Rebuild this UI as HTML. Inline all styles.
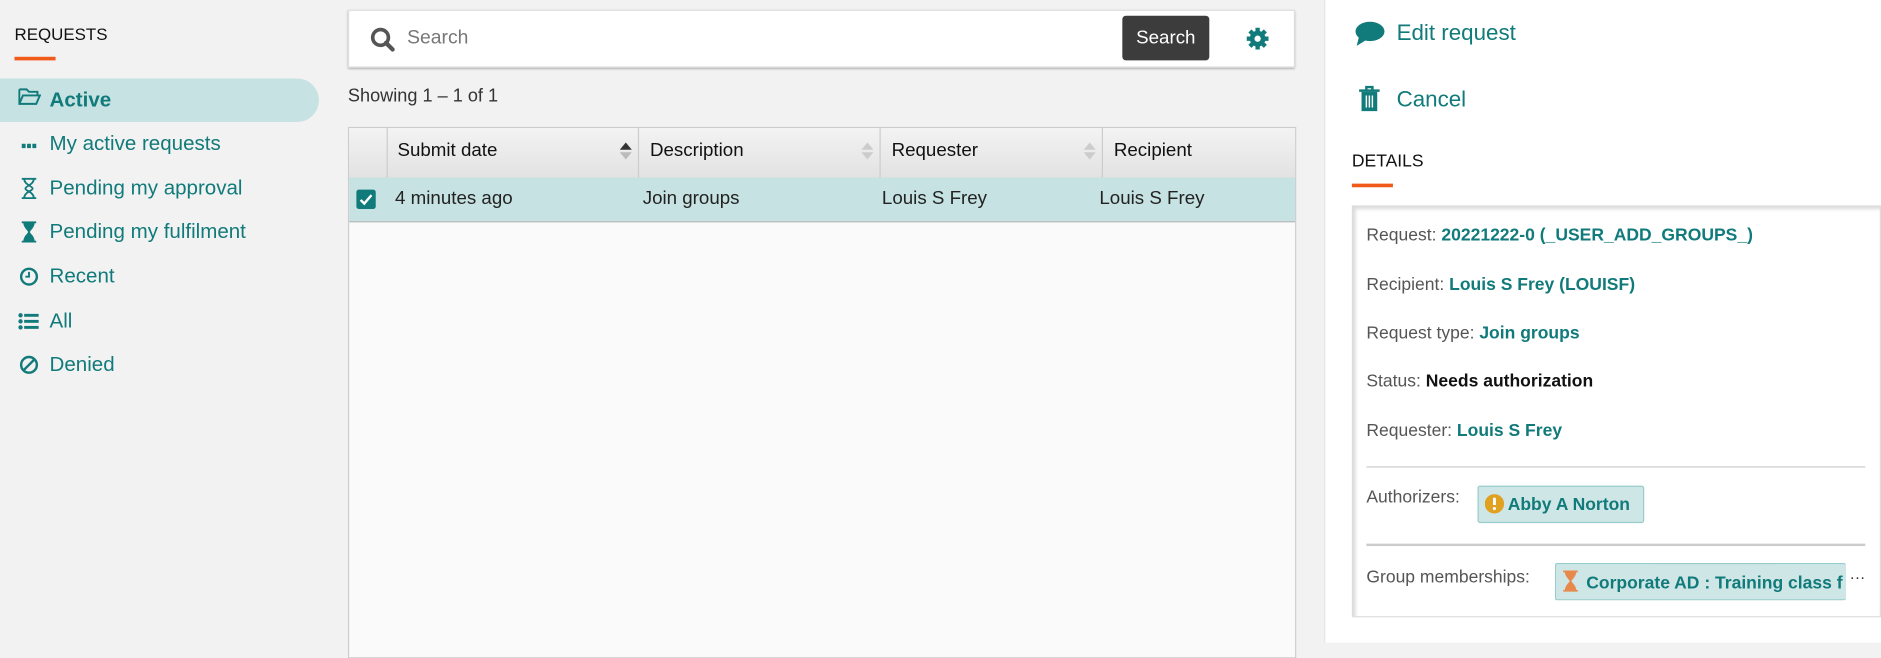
<!DOCTYPE html>
<html><head><meta charset="utf-8"><style>
html,body{margin:0;padding:0;width:1881px;height:643px;overflow:hidden;background:#f2f2f2;font-family:"Liberation Sans",sans-serif}
#w{position:absolute;left:0;top:0;width:1557px;height:532px;transform:scale(1.2081);transform-origin:0 0}
.a{position:absolute}
.t{color:#117a7a}
.nav{position:absolute;left:0;width:264px;height:36px;font-size:17px;color:#117a7a;line-height:36px}
.nav span{position:absolute;left:41px}
.nav i{position:absolute;left:14px;top:0;font-style:normal;width:20px;text-align:center}
.lbl{color:#555;font-size:14.5px}
.v{color:#117a7a;font-size:14.5px;font-weight:bold}
</style></head><body><div id="w">
<div class="a" style="left:12px;top:20px;font-size:14px;color:#111">REQUESTS</div>
<div class="a" style="left:12px;top:47px;width:34px;height:3px;background:#f05a1a"></div>
<div class="nav" style="top:65px;background:#c7e2e2;border-radius:0 18px 18px 0"><i><svg width="19" height="16" viewBox="0 0 19 16"><path d="M1 2h6l2 2h7v3M1 2v12h14l3-7H4L1 14" fill="none" stroke="#117a7a" stroke-width="1.6"/></svg></i><span style="font-weight:bold">Active</span></div>
<div class="nav" style="top:101px"><i><svg width="14" height="6" viewBox="0 0 14 6" style="margin-top:5px"><g fill="#117a7a"><rect x="1" y="1" width="3.2" height="3.6"/><rect x="5.4" y="1" width="3.2" height="3.6"/><rect x="9.8" y="1" width="3.2" height="3.6"/></g></svg></i><span>My active requests</span></div>
<div class="nav" style="top:138px"><i><svg width="14" height="18" viewBox="0 0 14 18" style="margin-top:9px"><path d="M1 1h12M1 17h12M3 1c0 5 7 6 7 8s-7 3-7 8M11 1c0 5-7 6-7 8s7 3 7 8" fill="none" stroke="#117a7a" stroke-width="1.5"/></svg></i><span>Pending my approval</span></div>
<div class="nav" style="top:174px"><i><svg width="14" height="18" viewBox="0 0 14 18" style="margin-top:9px"><path d="M1 1h12M1 17h12M3 1c0 5 4 6 4 8s-4 3-4 8h8c0-5-4-6-4-8s4-3 4-8z" fill="#117a7a" stroke="#117a7a" stroke-width="1.5"/></svg></i><span>Pending my fulfilment</span></div>
<div class="nav" style="top:211px"><i><svg width="16" height="16" viewBox="0 0 16 16" style="margin-top:10px"><circle cx="8" cy="8" r="6.5" fill="none" stroke="#117a7a" stroke-width="2"/><path d="M8 4v4H5" fill="none" stroke="#117a7a" stroke-width="1.6"/></svg></i><span>Recent</span></div>
<div class="nav" style="top:248px"><i><svg width="18" height="16" viewBox="0 0 18 16" style="margin-top:10px"><g fill="#117a7a"><circle cx="2" cy="3" r="1.8"/><circle cx="2" cy="8" r="1.8"/><circle cx="2" cy="13" r="1.8"/><rect x="5" y="1.8" width="12" height="2.4"/><rect x="5" y="6.8" width="12" height="2.4"/><rect x="5" y="11.8" width="12" height="2.4"/></g></svg></i><span>All</span></div>
<div class="nav" style="top:284px"><i><svg width="16" height="16" viewBox="0 0 16 16" style="margin-top:10px"><circle cx="8" cy="8" r="6.5" fill="none" stroke="#117a7a" stroke-width="2"/><path d="M4 12L12 4" stroke="#117a7a" stroke-width="2"/></svg></i><span>Denied</span></div>

<div class="a" style="left:288px;top:8px;width:784px;height:48px;background:#fff;box-shadow:0 1px 2px rgba(0,0,0,.35);border:1px solid #ddd;box-sizing:border-box"></div>
<svg class="a" style="left:306px;top:22px" width="22" height="22" viewBox="0 0 22 22"><circle cx="9" cy="9" r="6.5" fill="none" stroke="#555" stroke-width="3"/><path d="M13.5 13.5L19 19" stroke="#555" stroke-width="3.5" stroke-linecap="round"/></svg>
<div class="a" style="left:337px;top:23px;font-size:16px;color:#777">Search</div>
<div class="a" style="left:929px;top:13px;width:72px;height:37px;background:#3c3c3c;border-radius:3px;color:#fff;font-size:15.5px;line-height:37px;text-align:center">Search</div>
<svg class="a" style="left:1031px;top:22px" width="20" height="20" viewBox="0 0 20 20"><g fill="#117a7a"><circle cx="10" cy="10" r="6.5"/><g stroke="#117a7a" stroke-width="3.6"><path d="M10 1v18M1 10h18M3.6 3.6l12.8 12.8M16.4 3.6L3.6 16.4"/></g></g><circle cx="10" cy="10" r="2.6" fill="#fff"/></svg>
<div class="a" style="left:288px;top:71px;font-size:15px;color:#333">Showing 1 – 1 of 1</div>

<div class="a" style="left:288px;top:105px;width:785px;height:440px;background:#fafafa;border:1px solid #ccc;box-sizing:border-box"></div>
<div class="a" style="left:289px;top:106px;width:783px;height:41px;background:linear-gradient(#f3f3f3,#e2e2e2);border-bottom:1px solid #ccc"></div>
<div class="a" style="left:320px;top:106px;width:1px;height:41px;background:#ccc"></div>
<div class="a" style="left:528px;top:106px;width:1px;height:41px;background:#ccc"></div>
<div class="a" style="left:728px;top:106px;width:1px;height:41px;background:#ccc"></div>
<div class="a" style="left:912px;top:106px;width:1px;height:41px;background:#ccc"></div>
<div class="a" style="left:329px;top:116px;font-size:15.5px;color:#111">Submit date</div>
<div class="a" style="left:538px;top:116px;font-size:15.5px;color:#111">Description</div>
<div class="a" style="left:738px;top:116px;font-size:15.5px;color:#111">Requester</div>
<div class="a" style="left:922px;top:116px;font-size:15.5px;color:#111">Recipient</div>
<svg class="a" style="left:513px;top:118px" width="10" height="14"><path d="M0 6L5 0L10 6z" fill="#333"/><path d="M0 8L5 14L10 8z" fill="#bbb"/></svg>
<svg class="a" style="left:713px;top:118px" width="10" height="14"><path d="M0 6L5 0L10 6z" fill="#ccc"/><path d="M0 8L5 14L10 8z" fill="#ccc"/></svg>
<svg class="a" style="left:897px;top:118px" width="10" height="14"><path d="M0 6L5 0L10 6z" fill="#ccc"/><path d="M0 8L5 14L10 8z" fill="#ccc"/></svg>
<div class="a" style="left:289px;top:147px;width:783px;height:36px;background:#c7e2e2;border-bottom:1px solid #bbb"></div>
<div class="a" style="left:295px;top:157px;width:16px;height:16px;background:#117a7a;border-radius:2px"><svg width="16" height="16"><path d="M3.5 8.5l3 3 6-7" fill="none" stroke="#fff" stroke-width="2"/></svg></div>
<div class="a" style="left:327px;top:156px;font-size:15.5px;color:#222">4 minutes ago</div>
<div class="a" style="left:532px;top:156px;font-size:15.5px;color:#222">Join groups</div>
<div class="a" style="left:730px;top:156px;font-size:15.5px;color:#222">Louis S Frey</div>
<div class="a" style="left:910px;top:156px;font-size:15.5px;color:#222">Louis S Frey</div>

<div class="a" style="left:1096px;top:0;width:461px;height:532px;background:#fff;border-left:1px solid #e4e4e4"></div>
<svg class="a" style="left:1121px;top:17px" width="26" height="22" viewBox="0 0 26 22"><ellipse cx="13" cy="9" rx="12" ry="8" fill="#117a7a"/><path d="M4 13L2 21L10 16z" fill="#117a7a"/></svg>
<div class="a t" style="left:1156px;top:16px;font-size:18.5px">Edit request</div>
<svg class="a" style="left:1124px;top:71px" width="19" height="22" viewBox="0 0 19 22"><path d="M1 4h17M7 4V1h5v3" fill="none" stroke="#117a7a" stroke-width="2"/><path d="M3 5h13v16H3z" fill="#117a7a"/><path d="M7 8v10M9.5 8v10M12 8v10" stroke="#fff" stroke-width="1.2"/></svg>
<div class="a t" style="left:1156px;top:71px;font-size:18.5px">Cancel</div>
<div class="a" style="left:1119px;top:126px;font-size:14.5px;color:#111">DETAILS</div>
<div class="a" style="left:1119px;top:152px;width:34px;height:3px;background:#f05a1a"></div>
<div class="a" style="left:1119px;top:170px;width:438px;height:341px;background:#fff;border:1px solid #ddd;box-shadow:inset 2px 2px 3px rgba(0,0,0,.15);box-sizing:border-box"></div>
<div class="a" style="left:1131px;top:186px"><span class="lbl">Request: </span><span class="v">20221222-0 (_USER_ADD_GROUPS_)</span></div>
<div class="a" style="left:1131px;top:227px"><span class="lbl">Recipient: </span><span class="v">Louis S Frey (LOUISF)</span></div>
<div class="a" style="left:1131px;top:267px"><span class="lbl">Request type: </span><span class="v">Join groups</span></div>
<div class="a" style="left:1131px;top:307px"><span class="lbl">Status: </span><span class="v" style="color:#111">Needs authorization</span></div>
<div class="a" style="left:1131px;top:348px"><span class="lbl">Requester: </span><span class="v">Louis S Frey</span></div>
<div class="a" style="left:1131px;top:386px;width:413px;height:1px;background:#ccc"></div>
<div class="a lbl" style="left:1131px;top:404px">Authorizers:</div>
<div class="a" style="left:1223px;top:402px;width:138px;height:31px;background:#cfe6e6;border:1px solid #9cc;border-radius:2px;box-sizing:border-box"></div>
<svg class="a" style="left:1229px;top:409px" width="16" height="16"><circle cx="8" cy="8" r="8" fill="#e0a020"/><path d="M8 3v6" stroke="#fff" stroke-width="2.4"/><circle cx="8" cy="12" r="1.3" fill="#fff"/></svg>
<div class="a v" style="left:1248px;top:410px">Abby A Norton</div>
<div class="a" style="left:1131px;top:450px;width:413px;height:2px;background:#ccc"></div>
<div class="a lbl" style="left:1131px;top:470px">Group memberships:</div>
<div class="a" style="left:1287px;top:466px;width:241px;height:31px;background:#cfe6e6;border:1px solid #9cc;border-right:none;border-radius:2px;box-sizing:border-box;overflow:hidden"></div>
<svg class="a" style="left:1293px;top:472px" width="14" height="18" viewBox="0 0 14 18"><path d="M1 1h12M1 17h12M3 1c0 5 4 6 4 8s-4 3-4 8h8c0-5-4-6-4-8s4-3 4-8z" fill="#e8884a" stroke="#e8884a" stroke-width="1.5"/></svg>
<div class="a" style="left:1313px;top:474px;width:213px;overflow:hidden;white-space:nowrap"><span class="v">Corporate AD : Training class f</span></div>
<div class="a" style="left:1531px;top:470px;font-size:13px;color:#333">···</div>
</div></body></html>
